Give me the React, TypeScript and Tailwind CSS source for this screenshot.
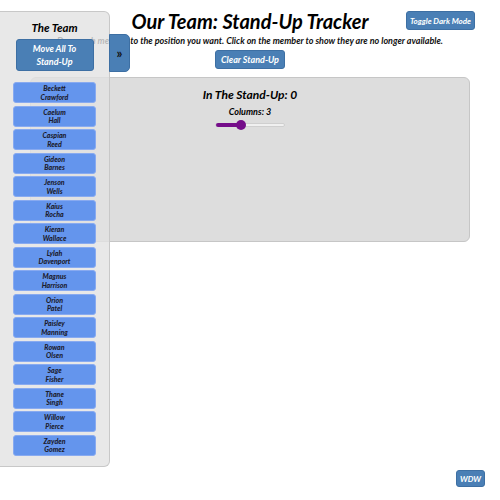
import React from "react";

const members = [
  ["Beckett", "Crawford"],
  ["Caelum", "Hall"],
  ["Caspian", "Reed"],
  ["Gideon", "Barnes"],
  ["Jenson", "Wells"],
  ["Kaius", "Rocha"],
  ["Kieran", "Wallace"],
  ["Lylah", "Davenport"],
  ["Magnus", "Harrison"],
  ["Orion", "Patel"],
  ["Paisley", "Manning"],
  ["Rowan", "Olsen"],
  ["Sage", "Fisher"],
  ["Thane", "Singh"],
  ["Willow", "Pierce"],
  ["Zayden", "Gomez"],
];

export default function App() {
  return (
    <div className="relative w-[500px] h-[500px] overflow-hidden bg-white font-['Lato',sans-serif] italic font-bold text-black">
      {/* Main */}
      <div className="flex flex-col items-center pt-[9px] px-[30px]">
        <h1 className="text-[20px] leading-[24px] font-bold">Our Team: Stand-Up Tracker</h1>
        <p className="mt-[2px] text-[9px] leading-[12px] text-[#111] whitespace-nowrap">
          Drag each member to the position you want. Click on the member to show they are no longer available.
        </p>
        <button className="mt-[3px] h-[19px] px-[5px] rounded-[3px] bg-[#4a7fb5] text-white text-[9px] border border-[#3d6fa3]">
          Clear Stand-Up
        </button>
        <div className="mt-[8px] w-full h-[165px] rounded-[6px] bg-[#dddddd] border border-[#c6c6c6] flex flex-col items-center pt-[9px]">
          <h2 className="text-[12px] leading-[16px]">In The Stand-Up: 0</h2>
          <span className="mt-[3px] text-[9px] leading-[11px]">Columns: 3</span>
          <div className="relative mt-[6px] w-[70px] h-[4px] rounded-full bg-[#f0f0f0] border border-[#cfcfcf]">
            <div className="absolute left-0 top-[-1px] h-[4px] w-[26px] rounded-full bg-[#750d8a]" />
            <div className="absolute left-[20px] top-[-4px] w-[10px] h-[10px] rounded-full bg-[#750d8a]" />
          </div>
        </div>
      </div>

      <button className="absolute right-[25px] top-[11px] h-[19px] px-[3px] rounded-[3px] bg-[#4a7fb5] text-white text-[8px] border border-[#3d6fa3]">
        Toggle Dark Mode
      </button>

      {/* Drawer */}
      <aside className="absolute left-0 top-[11px] w-[110px] h-[456px] bg-[#e2e2e2]/80 border border-l-0 border-[#c8c8c8] rounded-r-[6px] flex flex-col items-center">
        <h3 className="mt-[9px] text-[11.5px] leading-[14px]">The Team</h3>
        <button className="mt-[4px] w-[78px] h-[32px] rounded-[3px] bg-[#4a7fb5] border border-[#3d6fa3] text-white text-[9px] leading-[13px]">
          Move All To
          <br />
          Stand-Up
        </button>
        <ul className="mt-[11px] flex flex-col gap-[2.5px]">
          {members.map(([first, last]) => (
            <li
              key={first}
              className="w-[83px] h-[21px] rounded-[3px] bg-[#6495ed] border border-[#88aaf0] flex flex-col items-center justify-center text-[7px] leading-[8.5px] font-black text-[#1c1c2e]"
            >
              <span>{first}</span>
              <span>{last}</span>
            </li>
          ))}
        </ul>
        <button className="absolute left-[109px] top-[22px] w-[21px] h-[38px] rounded-r-[5px] bg-[#4a7fb5] border border-[#3d6fa3] text-[#111] text-[13px] leading-none flex items-center justify-center not-italic">
          »
        </button>
      </aside>

      <button className="absolute right-[15px] bottom-[13px] w-[29px] h-[17px] rounded-[3px] bg-[#4a7fb5] border border-[#3d6fa3] text-white text-[8px]">
        WDW
      </button>
    </div>
  );
}
